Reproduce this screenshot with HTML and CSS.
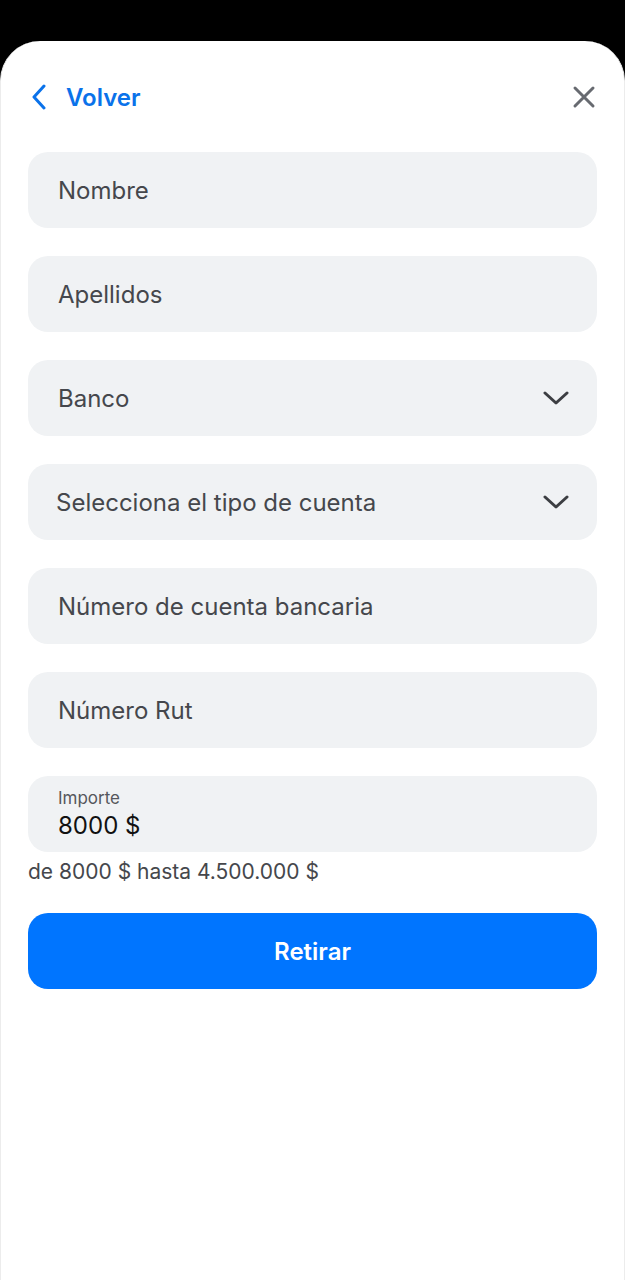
FILE: index.html
```html
<!DOCTYPE html>
<html lang="es">
<head>
  <meta charset="UTF-8" />
  <meta name="viewport" content="width=device-width, initial-scale=1.0"/>
  <title>Retirar</title>
  <link rel="stylesheet" href="styles.css">
</head>
<body>

  <div class="sheet">
    <header>
      <a href="#" class="back">
        <svg width="16" height="26" viewBox="0 0 16 26"><path d="M13 2 L3 13 L13 24" fill="none" stroke="currentColor" stroke-width="3" stroke-linecap="round" stroke-linejoin="round"/></svg>
        <span>Volver</span>
      </a>
      <button class="close" aria-label="Cerrar">
        <svg width="24" height="24" viewBox="0 0 24 24"><path d="M3 3 L21 21 M21 3 L3 21" fill="none" stroke="currentColor" stroke-width="3" stroke-linecap="round"/></svg>
      </button>
    </header>

    <form class="form">
      <div class="field">Nombre</div>
      <div class="field">Apellidos</div>
      <div class="field select">
        <span>Banco</span>
        <svg width="26" height="16" viewBox="0 0 26 16"><path d="M2 3 L13 13 L24 3" fill="none" stroke="currentColor" stroke-width="3" stroke-linecap="round" stroke-linejoin="round"/></svg>
      </div>
      <div class="field select tight">
        <span>Selecciona el tipo de cuenta</span>
        <svg width="26" height="16" viewBox="0 0 26 16"><path d="M2 3 L13 13 L24 3" fill="none" stroke="currentColor" stroke-width="3" stroke-linecap="round" stroke-linejoin="round"/></svg>
      </div>
      <div class="field">Número de cuenta bancaria</div>
      <div class="field">Número Rut</div>
      <div class="field amount">
        <small>Importe</small>
        <span>8000 $</span>
      </div>
      <p class="hint">de 8000 $ hasta 4.500.000 $</p>
      <button type="submit" class="submit">Retirar</button>
    </form>
  </div>

</body>
</html>
```

FILE: styles.css
```css
* {
  box-sizing: border-box;
}
body {
  font-family: Inter, "Noto Sans", Arial, sans-serif;
  margin: 0;
  background-color: #000;
}
.sheet {
  margin-top: 41px;
  min-height: 1239px;
  background-color: #fff;
  border-radius: 40px 40px 0 0;
  border-left: 1px solid #ececec;
  border-right: 1px solid #ececec;
  padding: 0 27px;
}
header {
  height: 56px;
  padding-top: 28px;
  box-sizing: content-box;
  display: flex;
  justify-content: space-between;
  align-items: center;
}
.back {
  display: flex;
  align-items: center;
  gap: 19px;
  padding-left: 3px;
  color: #0a72ea;
  text-decoration: none;
  font-size: 24px;
  font-weight: 600;
}
.close {
  border: none;
  background: none;
  padding: 0;
  margin-right: 1px;
  color: #676a70;
  display: flex;
}
.form {
  margin-top: 27px;
  display: flex;
  flex-direction: column;
  gap: 28px;
}
.field {
  height: 76px;
  background-color: #f0f2f4;
  border-radius: 20px;
  padding: 0 30px;
  display: flex;
  align-items: center;
  font-size: 24px;
  color: #45474c;
}
.select {
  justify-content: space-between;
}
.select svg {
  color: #3c3e42;
  margin-right: -2px;
}
.tight {
  padding-left: 28px;
}
.amount {
  flex-direction: column;
  align-items: flex-start;
  justify-content: center;
  gap: 3px;
  padding-bottom: 1px;
}
.amount small {
  font-size: 17px;
  color: #55575c;
}
.amount span {
  font-size: 24px;
  color: #111;
}
.hint {
  margin: -21px 0 0;
  font-size: 21px;
  color: #45474c;
}
.submit {
  margin-top: 1px;
  height: 76px;
  border: none;
  border-radius: 20px;
  background-color: #0075ff;
  color: #fff;
  font-family: inherit;
  font-size: 24px;
  font-weight: 600;
  cursor: pointer;
}
```
